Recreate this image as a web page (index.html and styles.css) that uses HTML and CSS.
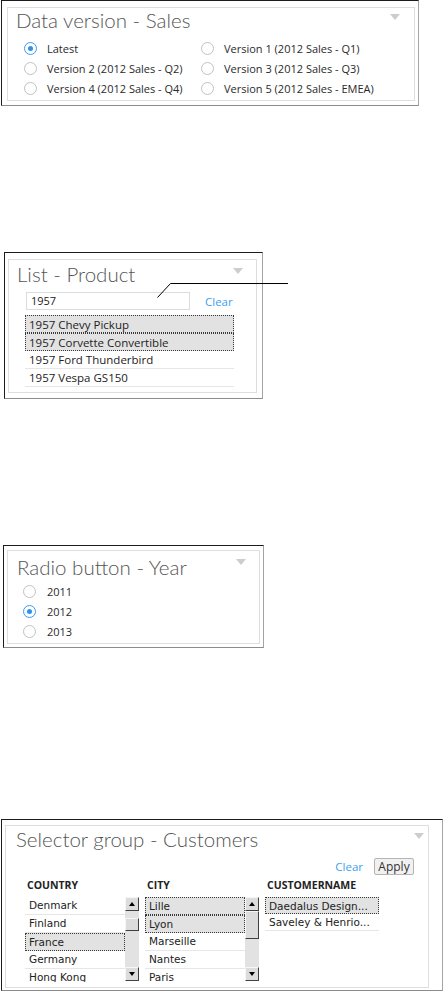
FILE: index.html
```html
<!DOCTYPE html>
<html>
<head>
<meta charset="utf-8">
<link rel="stylesheet" href="styles.css">
</head>
<body>
<svg class="callout" width="443" height="400" viewBox="0 0 443 400"><polyline points="157.5,297.5 170.5,283.5 288,283.5" fill="none" stroke="#000" stroke-width="1"/></svg>

<div class="frame f-data">
  <div class="panel">
    <div class="head h-data">
      <h2 class="title">Data version - Sales</h2>
      <span class="tri"></span>
    </div>
    <div class="radios two-col">
      <label class="opt"><span class="radio on"></span>Latest</label>
      <label class="opt"><span class="radio"></span>Version 1 (2012 Sales - Q1)</label>
      <label class="opt"><span class="radio"></span>Version 2 (2012 Sales - Q2)</label>
      <label class="opt"><span class="radio"></span>Version 3 (2012 Sales - Q3)</label>
      <label class="opt"><span class="radio"></span>Version 4 (2012 Sales - Q4)</label>
      <label class="opt"><span class="radio"></span>Version 5 (2012 Sales - EMEA)</label>
    </div>
  </div>
</div>

<div class="frame f-list">
  <div class="panel">
    <div class="head h-list">
      <h2 class="title">List - Product</h2>
      <span class="tri"></span>
    </div>
    <div class="search">
      <div class="input">1957</div>
      <span class="link">Clear</span>
    </div>
    <ul class="plist">
      <li class="sel">1957 Chevy Pickup</li>
      <li class="sel">1957 Corvette Convertible</li>
      <li>1957 Ford Thunderbird</li>
      <li>1957 Vespa GS150</li>
    </ul>
  </div>
</div>

<div class="frame f-year">
  <div class="panel">
    <div class="head h-year">
      <h2 class="title">Radio button - Year</h2>
      <span class="tri"></span>
    </div>
    <div class="radios one-col">
      <label class="opt"><span class="radio"></span>2011</label>
      <label class="opt"><span class="radio on"></span>2012</label>
      <label class="opt"><span class="radio"></span>2013</label>
    </div>
  </div>
</div>

<div class="frame f-sel">
  <div class="panel">
    <div class="head h-sel">
      <h2 class="title">Selector group - Customers</h2>
      <span class="tri"></span>
    </div>
    <div class="actions">
      <span class="link">Clear</span>
      <span class="btn">Apply</span>
    </div>
    <div class="cols">
      <div class="col">
        <div class="colhead">COUNTRY</div>
        <div class="box">
          <ul class="slist">
            <li>Denmark</li>
            <li>Finland</li>
            <li class="sel">France</li>
            <li>Germany</li>
            <li>Hong Kong</li>
          </ul>
          <div class="sbar">
            <span class="sbtn up"></span>
            <span class="track t-a"></span>
            <span class="thumb th-country"></span>
            <span class="track grow"></span>
            <span class="sbtn down"></span>
          </div>
        </div>
      </div>
      <div class="col">
        <div class="colhead">CITY</div>
        <div class="box">
          <ul class="slist">
            <li class="sel">Lille</li>
            <li class="sel">Lyon</li>
            <li>Marseille</li>
            <li>Nantes</li>
            <li>Paris</li>
          </ul>
          <div class="sbar">
            <span class="sbtn up"></span>
            <span class="thumb th-city"></span>
            <span class="track grow"></span>
            <span class="sbtn down"></span>
          </div>
        </div>
      </div>
      <div class="col">
        <div class="colhead">CUSTOMERNAME</div>
        <div class="box">
          <ul class="slist cust">
            <li class="sel">Daedalus Design...</li>
            <li>Saveley &amp; Henrio...</li>
          </ul>
        </div>
      </div>
    </div>
  </div>
</div>
</body>
</html>
```

FILE: styles.css
```css
* { box-sizing: border-box; }
html, body { margin: 0; padding: 0; background: #fff; }
body {
  position: relative;
  width: 443px;
  height: 992px;
  overflow: hidden;
  font-family: "Open Sans", "Liberation Sans", sans-serif;
  color: #333;
}
.callout { position: absolute; left: 0; top: 0; pointer-events: none; z-index: 5; }

.frame {
  display: flex;
  background: #fff;
  border-top: 1px solid #1c1c1c;
  border-left: 1px solid #1c1c1c;
  border-right: 1px solid #a4a4a4;
  border-bottom: 1px solid #8c8c8c;
}
.panel {
  flex: 1;
  border: 1px solid #dedede;
  background: #fff;
  display: flex;
  flex-direction: column;
}

.f-data { margin-left: 1px; width: 418px; height: 106px; padding: 6px 3px 4px 5px; }
.f-list { margin: 146px 0 0 4px; width: 259px; height: 147px; padding: 6px 5px 5px 3px; }
.f-year { margin: 146px 0 0 3px; width: 261px; height: 103px; padding: 4px 3px 3px 3px; }
.f-sel  { margin: 171px 0 0 1px; width: 442px; height: 172px; padding: 5px 13px 2px 3px; }

.head { display: flex; justify-content: space-between; align-items: flex-start; }
.title {
  margin: 0;
  font-family: "Lato", "Open Sans", sans-serif;
  font-weight: 300;
  font-size: 20.5px;
  line-height: 24px;
  color: #555;
  white-space: nowrap;
}
.tri {
  width: 0; height: 0;
  border-left: 5.5px solid transparent;
  border-right: 5.5px solid transparent;
  border-top: 6px solid #cdcdcd;
}
.h-data .title { padding-left: 8px; }
.h-data .tri { margin: 6px 14px 0 0; }
.h-list { padding-top: 2px; }
.h-list .title { padding-left: 8px; }
.h-list .tri { margin: 6px 13px 0 0; }
.h-year { padding-top: 4px; }
.h-year .title { padding-left: 9px; }
.h-year .tri { margin: 4px 13px 0 0; }
.h-sel { padding-top: 1px; }
.h-sel .title { padding-left: 10px; }
.h-sel .tri { margin: 6px 4px 0 0; }

/* radios */
.radios { display: grid; }
.two-col { grid-template-columns: 177px auto; margin: 6px 0 0 16px; }
.one-col { grid-template-columns: auto; margin: 2px 0 0 15px; }
.opt {
  display: flex;
  align-items: center;
  height: 20px;
  font-size: 11px;
  color: #2a2a2a;
  white-space: nowrap;
}
.radio {
  width: 13px; height: 13px;
  border: 1px solid #c2c2c2;
  border-radius: 50%;
  margin-right: 10px;
  display: flex;
  align-items: center;
  justify-content: center;
  flex: none;
}
.one-col .radio { margin-right: 11px; }
.radio.on { border-color: #3b9bef; }
.radio.on::after {
  content: "";
  width: 5px; height: 5px;
  border-radius: 50%;
  background: #2f92ec;
}

/* list panel */
.search { display: flex; align-items: center; margin: 6px 0 0 17px; }
.input {
  width: 164px; height: 18px;
  border: 1px solid #dcdcdc;
  font-size: 11px;
  line-height: 16px;
  padding-left: 4px;
  color: #222;
}
.link { font-size: 11.5px; color: #3d9ff0; }
.search .link { margin-left: 15px; }
.plist {
  list-style: none;
  margin: 5px 0 0 16px;
  padding: 0;
  width: 209px;
}
.plist li {
  height: 18px;
  line-height: 17px;
  font-size: 11.5px;
  color: #222;
  padding-left: 4px;
  border-bottom: 1px solid #e6e6e6;
  white-space: nowrap;
  overflow: hidden;
}
.plist li.sel, .slist li.sel {
  background: #e2e2e2;
  border: 1px dotted #3a3a3a;
  padding-left: 3px;
}

/* selector group */
.actions { display: flex; justify-content: flex-end; align-items: center; margin: 7px 14px 0 0; height: 17px; }
.actions .link { margin-right: 11px; }
.btn {
  height: 17px;
  width: 40px;
  border: 1px solid #b4b4b4;
  border-radius: 2px;
  background: #f1f1f1;
  font-size: 12px;
  line-height: 15px;
  text-align: center;
  color: #333;
}
.cols { display: grid; grid-template-columns: 114px 114px 114px; column-gap: 6px; margin: 3px 0 0 19px; }
.colhead {
  font-weight: 700;
  font-size: 10.5px;
  line-height: 14px;
  color: #222;
  padding-left: 2px;
  margin-bottom: 5px;
}
.box { display: flex; height: 85px; overflow: hidden; }
.slist { list-style: none; margin: 0; padding: 0; flex: 1; min-width: 0; }
.slist li {
  height: 18px;
  line-height: 17px;
  font-family: "DejaVu Sans", "Liberation Sans", sans-serif;
  font-size: 10.5px;
  color: #222;
  padding-left: 4px;
  border-bottom: 1px solid #e6e6e6;
  white-space: nowrap;
  overflow: hidden;
}
.cust li { height: 17px; line-height: 16px; }

.sbar { width: 14px; height: 84px; display: flex; flex-direction: column; background: #e2e2e2; flex: none; }
.sbtn, .thumb {
  flex: none;
  background: #dcdcdc;
  border-top: 1px solid #f6f6f6;
  border-left: 1px solid #f6f6f6;
  border-right: 1px solid #404040;
  border-bottom: 1px solid #404040;
}
.sbtn { height: 14px; display: flex; align-items: center; justify-content: center; }
.sbtn::after { content: ""; width: 0; height: 0; border-left: 3px solid transparent; border-right: 3px solid transparent; }
.up::after { border-bottom: 4px solid #000; }
.down::after { border-top: 4px solid #000; }
.track { flex: none; }
.t-a { height: 7px; }
.grow { flex: 1; }
.th-country { height: 13px; }
.th-city { height: 28px; }
```
